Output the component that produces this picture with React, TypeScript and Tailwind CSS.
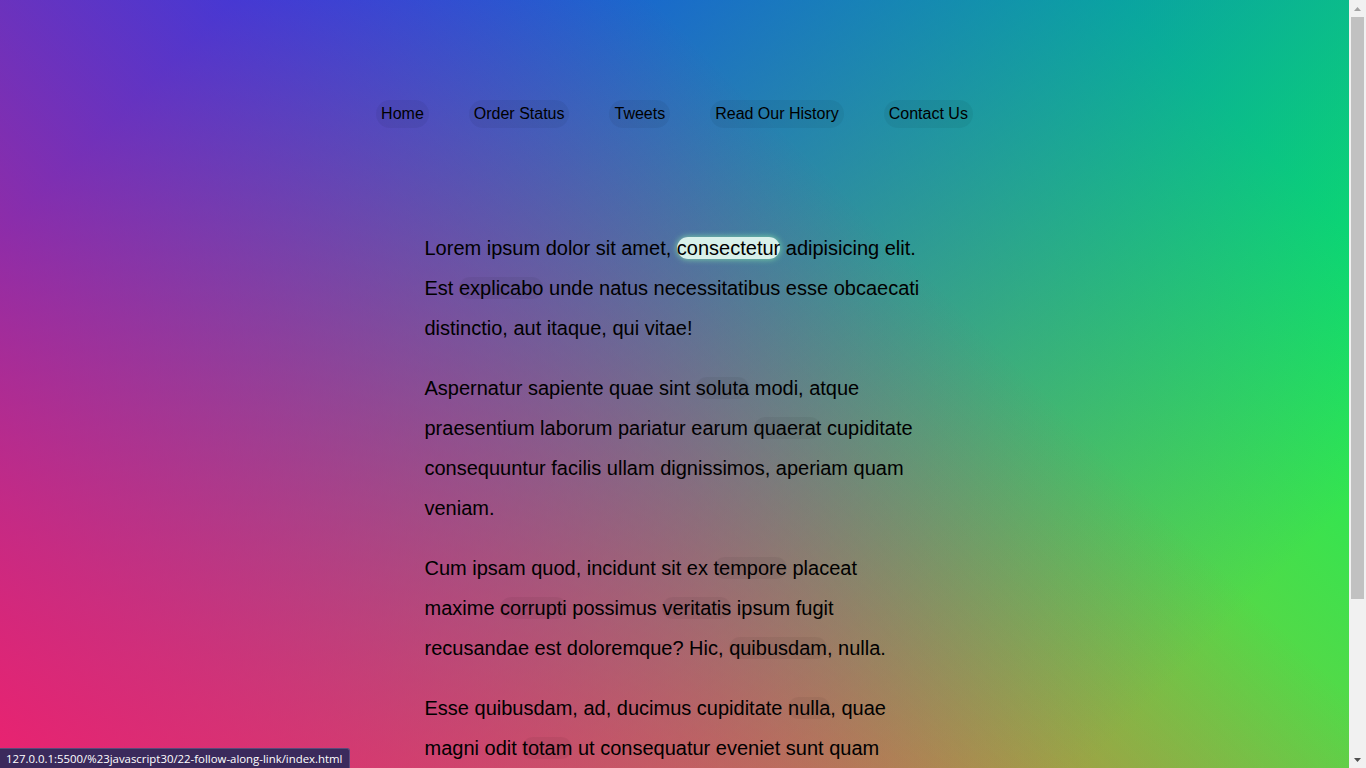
const menu = ["Home", "Order Status", "Tweets", "Read Our History", "Contact Us"];

function Link({ children, active }: { children: React.ReactNode; active?: boolean }) {
  if (active) {
    return (
      <a className="rounded-[20px] bg-[#d8f0ea] text-black shadow-[0_0_6px_rgba(140,240,170,0.8)]">
        {children}
      </a>
    );
  }
  return <a className="rounded-[20px] bg-black/5 text-black">{children}</a>;
}

export default function App() {
  return (
    <div className="relative flex h-[768px] items-start overflow-hidden font-['Liberation_Sans',Arial,sans-serif] text-black">
      {/* PAGE */}
      <div className="flex-1 pb-5 bg-[image:linear-gradient(45deg,hsla(340,100%,55%,1)_0%,hsla(340,100%,55%,0)_70%),linear-gradient(135deg,hsla(225,95%,50%,1)_10%,hsla(225,95%,50%,0)_80%),linear-gradient(225deg,hsla(140,90%,50%,1)_10%,hsla(140,90%,50%,0)_80%),linear-gradient(315deg,hsla(35,95%,55%,1)_100%,hsla(35,95%,55%,0)_70%)]">
        <nav className="pt-[100px]">
          <ul className="flex justify-center">
            {menu.map((item) => (
              <li key={item}>
                <a className="mx-5 inline-block rounded-[20px] bg-black/5 p-[5px] text-base leading-[normal] text-black">
                  {item}
                </a>
              </li>
            ))}
          </ul>
        </nav>

        <div className="mx-auto mt-[100px] flex max-w-[500px] flex-col gap-5 text-[20px] leading-10">
          <p>
            Lorem ipsum dolor sit amet, <Link active>consectetur</Link> adipisicing elit. Est{" "}
            <Link>explicabo</Link> unde natus necessitatibus esse obcaecati distinctio, aut itaque, qui vitae!
          </p>
          <p>
            Aspernatur sapiente quae sint <Link>soluta</Link> modi, atque praesentium laborum pariatur earum{" "}
            <Link>quaerat</Link> cupiditate consequuntur facilis ullam dignissimos, aperiam quam veniam.
          </p>
          <p>
            Cum ipsam quod, incidunt sit ex <Link>tempore</Link> placeat maxime <Link>corrupti</Link> possimus{" "}
            <Link>veritatis</Link> ipsum fugit recusandae est doloremque? Hic, <Link>quibusdam</Link>, nulla.
          </p>
          <p>
            Esse quibusdam, ad, ducimus cupiditate <Link>nulla</Link>, quae magni odit <Link>totam</Link> ut
            consequatur eveniet sunt quam provident sapiente dicta neque quod.
          </p>
          <p>
            Aliquam <Link>dicta</Link> sequi culpa fugiat <Link>consequuntur</Link> pariatur optio ad minima,
            maxime <Link>odio</Link>, distinctio magni impedit tempore enim <Link>repudiandae</Link> quas!
          </p>
        </div>
      </div>

      {/* SCROLLBAR */}
      <div className="flex h-[768px] w-[17px] flex-col bg-[#f1f1f1]">
        <div className="flex h-[17px] items-center justify-center">
          <svg width="7" height="4" viewBox="0 0 7 4">
            <polygon points="3.5,0 7,4 0,4" fill="#a3a3a3" />
          </svg>
        </div>
        <div className="flex-1">
          <div className="mx-[2px] h-[582px] bg-[#c1c1c1]" />
        </div>
        <div className="flex h-[17px] items-center justify-center">
          <svg width="7" height="4" viewBox="0 0 7 4">
            <polygon points="0,0 7,0 3.5,4" fill="#505050" />
          </svg>
        </div>
      </div>

      {/* STATUS BAR */}
      <div className="absolute bottom-0 left-0 flex h-5 items-center rounded-tr-[3px] border-t border-r border-[#5a4a7a] bg-[#3b2a5c] px-[6px] font-['Open_Sans',sans-serif] text-[11.4px] text-white">
        127.0.0.1:5500/%23javascript30/22-follow-along-link/index.html
      </div>
    </div>
  );
}
